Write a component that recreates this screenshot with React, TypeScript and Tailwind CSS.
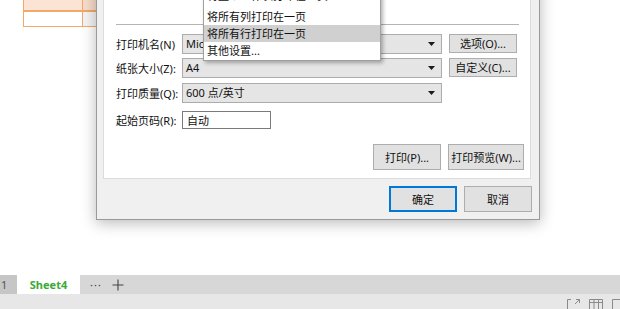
import React from "react";

const FONT = { fontFamily: '"Noto Sans", "Noto Sans CJK SC", sans-serif' };

function Arrow() {
  return (
    <svg width="7" height="4" viewBox="0 0 7 4" className="shrink-0">
      <path d="M0 0H7L3.5 4Z" fill="#1a1a1a" />
    </svg>
  );
}

function Select({ text }: { text: string }) {
  return (
    <div className="w-[260px] h-[20px] bg-[#e5e5e5] border border-[#acacac] flex items-center pl-[3px] pr-[6px] overflow-hidden">
      <span className="flex-1 whitespace-nowrap text-[#111] leading-[14px]">{text}</span>
      <Arrow />
    </div>
  );
}

function Btn({ label, w, h, primary }: { label: string; w: string; h: string; primary?: boolean }) {
  return (
    <div
      className={`${w} ${h} flex items-center justify-center bg-[#e1e1e1] border text-[#111] ${
        primary ? "border-[#0078d7] shadow-[inset_0_0_0_1px_#0078d7]" : "border-[#adadad]"
      }`}
    >
      {label}
    </div>
  );
}

export default function App() {
  return (
    <div className="relative w-[620px] h-[309px] overflow-hidden bg-white flex flex-col text-[11px] leading-none" style={FONT}>
      {/* spreadsheet area */}
      <div className="h-[279px] relative">
        <div className="ml-[23px] flex flex-col w-[80px] border-l border-[#f4a868]">
          <div className="flex h-[10px] bg-[#fce4d4]">
            <div className="w-[59px] border-r border-[#f4a868]" />
            <div className="flex-1 bg-[#f8dccb]" />
          </div>
          <div className="h-[2px] bg-[#f4a868]" />
          <div className="flex h-[14px]">
            <div className="w-[59px] border-r border-[#f4a868]" />
            <div className="flex-1 bg-[#f4f4f4]" />
          </div>
          <div className="h-[1px] bg-[#f4a868]" />
        </div>

        {/* dialog */}
        <div className="absolute left-[96px] top-[-20px] w-[444px] border border-[#9a9a9a] bg-[#f0f0f0] shadow-[0_3px_14px_rgba(0,0,0,0.28)] flex flex-col pb-[7px]">
          <div className="ml-[6px] mr-[8px] bg-white border border-[#dcdcdc] flex flex-col pb-[8px]">
            <div className="h-[42px]" />
            <div className="ml-[12px] mr-[11px] h-[1px] bg-[#b4b4b4]" />
            <div className="flex items-start mt-[9px] ml-[12px]">
              <div className="w-[66px] h-[20px] flex items-center text-[#111]">打印机名(N)</div>
              <Select text="Microsoft Print to PDF" />
              <div className="ml-[7px]">
                <Btn label="选项(O)..." w="w-[68px]" h="h-[19px]" />
              </div>
            </div>
            <div className="flex items-start mt-[4px] ml-[12px]">
              <div className="w-[66px] h-[20px] flex items-center text-[#111]">纸张大小(Z):</div>
              <Select text="A4" />
              <div className="ml-[7px]">
                <Btn label="自定义(C)..." w="w-[68px]" h="h-[19px]" />
              </div>
            </div>
            <div className="flex items-start mt-[5px] ml-[12px]">
              <div className="w-[66px] h-[20px] flex items-center text-[#111]">打印质量(Q):</div>
              <Select text="600 点/英寸" />
            </div>
            <div className="flex items-center mt-[8px] ml-[12px]">
              <div className="w-[66px] h-[18px] flex items-center text-[#111]">起始页码(R):</div>
              <div className="w-[89px] h-[18px] border border-[#7a7a7a] bg-white flex items-center pl-[4px] text-[#111]">自动</div>
            </div>
            <div className="flex justify-end gap-[7px] mt-[15px] mr-[6px]">
              <Btn label="打印(P)..." w="w-[68px]" h="h-[26px]" />
              <Btn label="打印预览(W)..." w="w-[76px]" h="h-[26px]" />
            </div>
          </div>
          <div className="flex justify-end gap-[7px] mt-[7px] mr-[7px]">
            <Btn label="确定" w="w-[68px]" h="h-[26px]" primary />
            <Btn label="取消" w="w-[68px]" h="h-[26px]" />
          </div>
        </div>

        {/* dropdown menu */}
        <div className="absolute left-[203px] top-[-10px] w-[178px] bg-white border border-[#a0a0a0] shadow-[2px_2px_4px_rgba(0,0,0,0.3)] flex flex-col pb-[1px] text-[#111]">
          <div className="h-[17px] flex items-start pl-[3px] overflow-hidden">
            <span className="-mt-[1px]">将整个工作表打印在一页</span>
          </div>
          <div className="h-[17px] flex items-center pl-[3px]">将所有列打印在一页</div>
          <div className="h-[17px] flex items-center pl-[3px] bg-[#d0d0d0]">将所有行打印在一页</div>
          <div className="h-[17px] flex items-center pl-[3px]">其他设置...</div>
        </div>
      </div>

      {/* sheet tab bar */}
      <div className="h-[19px] bg-[#d7d7d7] flex items-stretch">
        <div className="w-[17px] bg-[#c6c6c6] flex items-center pl-[1px] text-[#555]">1</div>
        <div className="w-[63px] bg-white flex items-center justify-center font-bold text-[#3aaa35]">Sheet4</div>
        <div className="flex items-center ml-[10px] text-[#444] tracking-[1px]">···</div>
        <div className="flex items-center ml-[10px]">
          <svg width="12" height="12" viewBox="0 0 12 12">
            <path d="M6 0.5V11.5M0.5 6H11.5" stroke="#444" strokeWidth="1.1" />
          </svg>
        </div>
      </div>

      {/* status bar */}
      <div className="flex-1 bg-[#e7e7e7] flex items-start justify-end pt-[5px] gap-[9px]">
        <svg width="13" height="10" viewBox="0 0 13 10">
          <path d="M0.5 10V0.5H4M9 0.5H12.5V4M8 5L12.5 0.5" stroke="#8a8a8a" strokeWidth="1" fill="none" />
        </svg>
        <svg width="14" height="10" viewBox="0 0 14 10">
          <path d="M0.5 10V0.5H13.5V10M0.5 3.5H13.5M5 0.5V10M9.5 0.5V10" stroke="#8a8a8a" strokeWidth="1" fill="none" />
        </svg>
        <svg width="8" height="10" viewBox="0 0 8 10">
          <path d="M0.5 10V0.5H8" stroke="#8a8a8a" strokeWidth="1" fill="none" />
        </svg>
      </div>
    </div>
  );
}
